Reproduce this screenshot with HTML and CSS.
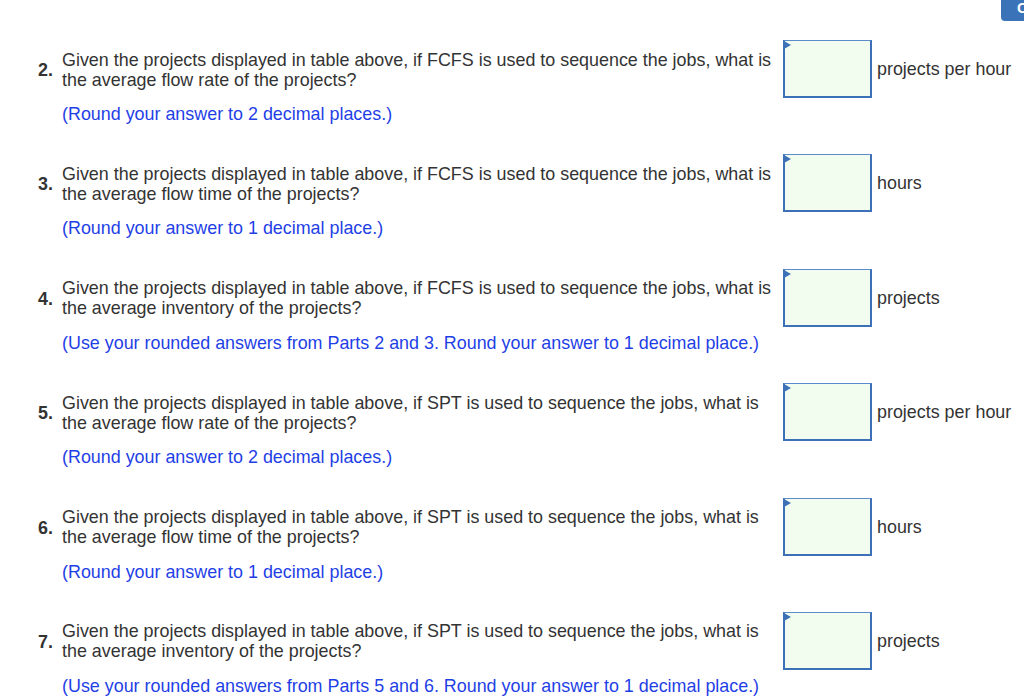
FILE: index.html
```html
<!DOCTYPE html>
<html>
<head>
<meta charset="utf-8">
<link rel="stylesheet" href="styles.css">
</head>
<body>
<div class="topbtn"><span>Check my work</span></div>
<div class="page">
  <div class="q">
    <div class="num">2.</div>
    <div class="text">Given the projects displayed in table above, if FCFS is used to sequence the jobs, what is the average flow rate of the projects?</div>
    <div class="box"></div>
    <div class="unit">projects per hour</div>
    <div class="note">(Round your answer to 2 decimal places.)</div>
  </div>
  <div class="q">
    <div class="num">3.</div>
    <div class="text">Given the projects displayed in table above, if FCFS is used to sequence the jobs, what is the average flow time of the projects?</div>
    <div class="box"></div>
    <div class="unit">hours</div>
    <div class="note">(Round your answer to 1 decimal place.)</div>
  </div>
  <div class="q">
    <div class="num">4.</div>
    <div class="text">Given the projects displayed in table above, if FCFS is used to sequence the jobs, what is the average inventory of the projects?</div>
    <div class="box"></div>
    <div class="unit">projects</div>
    <div class="note">(Use your rounded answers from Parts 2 and 3. Round your answer to 1 decimal place.)</div>
  </div>
  <div class="q">
    <div class="num">5.</div>
    <div class="text">Given the projects displayed in table above, if SPT is used to sequence the jobs, what is the average flow rate of the projects?</div>
    <div class="box"></div>
    <div class="unit">projects per hour</div>
    <div class="note">(Round your answer to 2 decimal places.)</div>
  </div>
  <div class="q">
    <div class="num">6.</div>
    <div class="text">Given the projects displayed in table above, if SPT is used to sequence the jobs, what is the average flow time of the projects?</div>
    <div class="box"></div>
    <div class="unit">hours</div>
    <div class="note">(Round your answer to 1 decimal place.)</div>
  </div>
  <div class="q">
    <div class="num">7.</div>
    <div class="text">Given the projects displayed in table above, if SPT is used to sequence the jobs, what is the average inventory of the projects?</div>
    <div class="box"></div>
    <div class="unit">projects</div>
    <div class="note">(Use your rounded answers from Parts 5 and 6. Round your answer to 1 decimal place.)</div>
  </div>
</div>
</body>
</html>
```
FILE: styles.css
```css
html, body {
  margin: 0;
  padding: 0;
  background: #ffffff;
  overflow: hidden;
  height: 699px;
}
body {
  font-family: "Liberation Sans", Arial, sans-serif;
  font-size: 17.9px;
  color: #333333;
  position: relative;
}
.topbtn {
  position: absolute;
  top: 0;
  left: 1001px;
  width: 23px;
  height: 21px;
  background: #3b73b9;
  border-radius: 0 0 0 4px;
  overflow: hidden;
  white-space: nowrap;
}
.topbtn span {
  display: block;
  padding-left: 16px;
  color: #ffffff;
  font-weight: bold;
  font-size: 15px;
  line-height: 15px;
}
.page {
  padding-top: 40px;
}
.q {
  display: grid;
  grid-template-columns: 24px 721px 89px auto;
  column-gap: 0;
  row-gap: 6px;
  align-items: center;
  padding-left: 38px;
  padding-bottom: 30.4px;
}
.num {
  font-weight: bold;
  line-height: 20px;
  padding-top: 2px;
}
.text {
  line-height: 20px;
  padding-right: 9px;
  padding-top: 1px;
}
.box {
  position: relative;
  width: 89px;
  height: 58px;
  box-sizing: border-box;
  background: #f2fdf0;
  border: 2px solid #3c71b8;
  border-top: 1px solid #5b8bc9;
}
.box::before {
  content: "";
  position: absolute;
  left: -1px;
  top: 0;
  width: 0;
  height: 0;
  border-top: 4px solid transparent;
  border-bottom: 4px solid transparent;
  border-left: 7px solid #3c71b8;
}
.unit {
  padding-left: 5px;
  line-height: 20px;
  white-space: nowrap;
}
.note {
  grid-column: 2 / 5;
  color: #1f3fe6;
  line-height: 20px;
}
```
